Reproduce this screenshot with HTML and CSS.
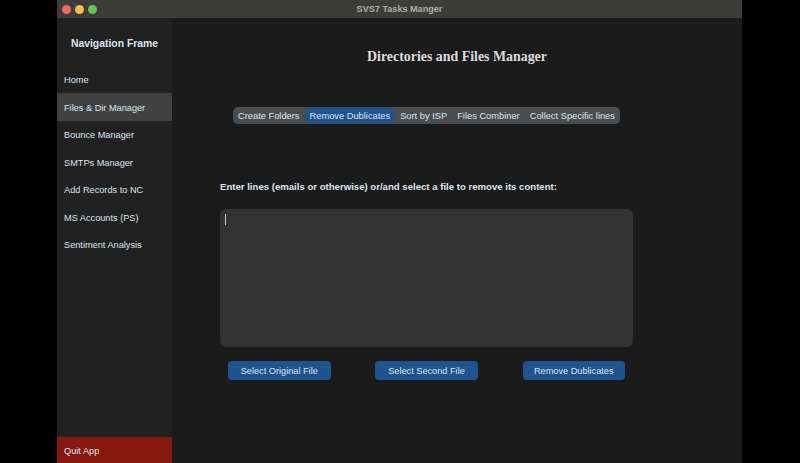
FILE: index.html
```html
<!DOCTYPE html>
<html lang="en">
<head>
<meta charset="utf-8">
<title>SVS7 Tasks Manger</title>
<link rel="stylesheet" href="styles.css">
</head>
<body>
<div class="window">
  <div class="titlebar">
    <div class="lights">
      <span class="light red"></span>
      <span class="light yellow"></span>
      <span class="light green"></span>
    </div>
    <div class="wtitle">SVS7 Tasks Manger</div>
    <div></div>
  </div>
  <div class="body">
    <aside class="sidebar">
      <div class="nav-title">Navigation Frame</div>
      <div class="nav-item">Home</div>
      <div class="nav-item active">Files &amp; Dir Manager</div>
      <div class="nav-item">Bounce Manager</div>
      <div class="nav-item">SMTPs Manager</div>
      <div class="nav-item">Add Records to NC</div>
      <div class="nav-item">MS Accounts (PS)</div>
      <div class="nav-item">Sentiment Analysis</div>
      <div class="quit">Quit App</div>
    </aside>
    <main class="main">
      <h1 class="page-title">Directories and Files Manager</h1>
      <div class="content">
        <div class="tabs-row">
          <div class="tabs">
            <span class="tab">Create Folders</span>
            <span class="tab selected">Remove Dublicates</span>
            <span class="tab">Sort by ISP</span>
            <span class="tab">Files Combiner</span>
            <span class="tab">Collect Specific lines</span>
          </div>
        </div>
        <p class="label">Enter lines (emails or otherwise) or/and select a file to remove its content:</p>
        <div class="textbox"><span class="caret"></span></div>
        <div class="buttons">
          <button class="btn">Select Original File</button>
          <button class="btn">Select Second File</button>
          <button class="btn">Remove Dublicates</button>
        </div>
      </div>
    </main>
  </div>
</div>
</body>
</html>
```

FILE: styles.css
```css
* { box-sizing: border-box; }
html, body {
  margin: 0;
  padding: 0;
  background: #000;
  height: 463px;
  overflow: hidden;
}
body {
  font-family: "Liberation Sans", Arial, sans-serif;
  color: #dce4ee;
}
.window {
  margin-left: 57px;
  width: 685px;
  height: 463px;
  display: flex;
  flex-direction: column;
}
.titlebar {
  height: 18px;
  background: #3c3d38;
  display: grid;
  grid-template-columns: 1fr auto 1fr;
  align-items: center;
}
.lights {
  display: flex;
  gap: 4.3px;
  padding-left: 4.5px;
  align-items: center;
}
.light {
  width: 9px;
  height: 9px;
  border-radius: 50%;
  display: block;
}
.red { background: #ec6a5e; }
.yellow { background: #f4bf4f; }
.green { background: #61c554; }
.wtitle {
  font-size: 9.1px;
  font-weight: bold;
  color: #aeaeae;
  line-height: 18px;
}
.body {
  flex: 1;
  display: flex;
  min-height: 0;
}
.sidebar {
  width: 115px;
  background: #212121;
  display: flex;
  flex-direction: column;
}
.nav-title {
  height: 47.5px;
  padding-top: 19.5px;
  line-height: 12px;
  font-size: 10.4px;
  font-weight: bold;
  text-align: center;
  color: #dce4ee;
}
.nav-item {
  height: 27.5px;
  display: flex;
  align-items: center;
  padding: 1.5px 0 0 7px;
  font-size: 9.2px;
  color: #dce4ee;
}
.nav-item.active {
  background: #414141;
}
.quit {
  margin-top: auto;
  height: 25.7px;
  background: #86190f;
  display: flex;
  align-items: center;
  padding: 2px 0 0 7px;
  font-size: 9.2px;
  color: #dce4ee;
}
.main {
  flex: 1;
  background: #1b1b1b;
  display: flex;
  flex-direction: column;
}
.page-title {
  margin: 30px 0 0;
  font-family: "Liberation Serif", "Times New Roman", serif;
  font-size: 13.9px;
  line-height: 18px;
  font-weight: bold;
  text-align: center;
  color: #dcdcdc;
}
.content {
  margin: 0 109px 0 48px;
  display: flex;
  flex-direction: column;
}
.tabs-row {
  margin-top: 40.7px;
  display: flex;
  justify-content: center;
}
.tabs {
  display: flex;
  gap: 2px;
  padding: 1.5px 1px;
  background: #4a4d50;
  border-radius: 5px;
  height: 17.5px;
  align-items: stretch;
}
.tab {
  display: flex;
  align-items: center;
  padding: 1px 4px 0;
  font-size: 9.3px;
  color: #dce4ee;
  border-radius: 3px;
}
.tab.selected {
  background: #1f538d;
}
.label {
  margin: 57px 0 0;
  font-size: 9.6px;
  line-height: 12px;
  font-weight: bold;
  color: #dce4ee;
}
.textbox {
  margin-top: 16.3px;
  height: 137.7px;
  background: #333333;
  border-radius: 6px;
  padding: 5px 0 0 5px;
}
.caret {
  display: block;
  width: 1px;
  height: 11px;
  background: #c8c8c8;
}
.buttons {
  margin-top: 13.7px;
  display: flex;
  justify-content: space-between;
  padding: 0 8px;
}
.btn {
  width: 102.5px;
  height: 18.7px;
  border: 0;
  border-radius: 4px;
  background: #1f538d;
  color: #dce4ee;
  font-family: "Liberation Sans", Arial, sans-serif;
  font-size: 9.2px;
  padding: 1px 0 0;
}
```
